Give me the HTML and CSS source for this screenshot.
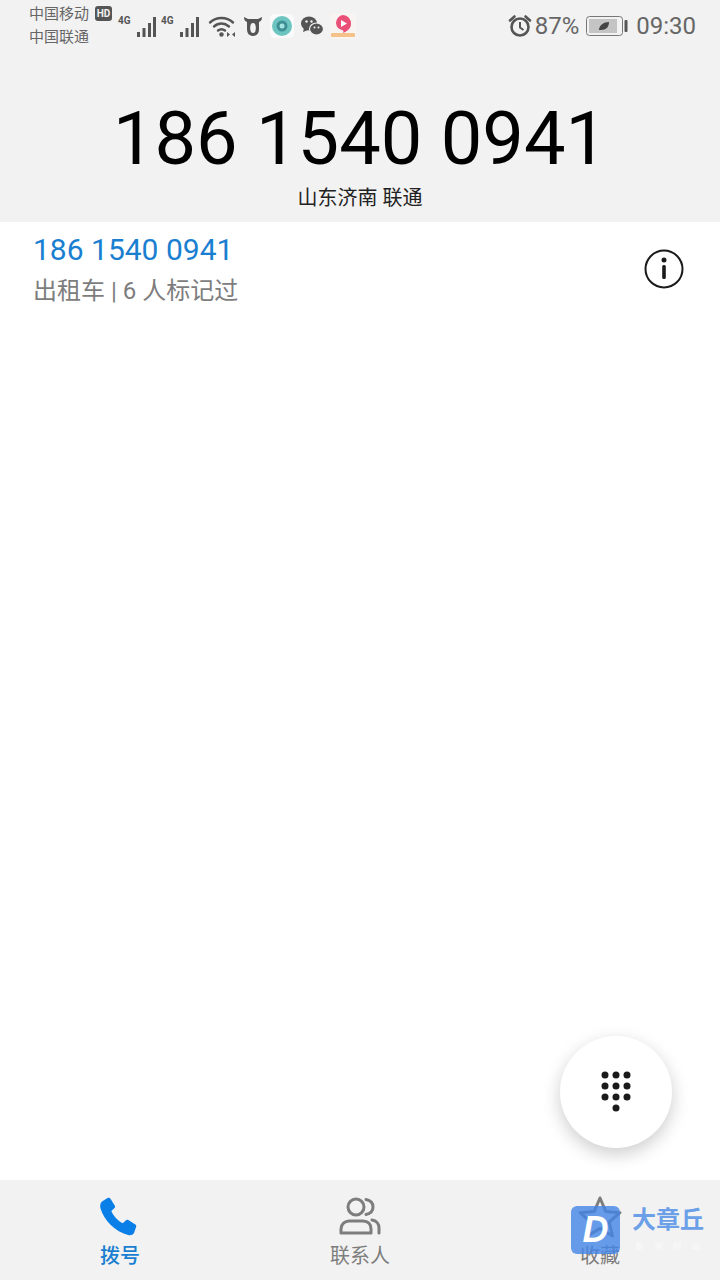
FILE: index.html
```html
<!DOCTYPE html>
<html lang="zh-CN">
<head>
<meta charset="utf-8">
<title>拨号</title>
<link rel="stylesheet" href="styles.css">
</head>
<body>
<div class="app">
  <header class="top">
    <div class="status">
      <div class="carriers">
        <div class="carrier">中国移动<svg class="hd" viewBox="0 0 17 15"><rect width="17" height="15" rx="3" fill="#555"/></svg><span class="hd-text">HD</span></div>
        <div class="carrier">中国联通</div>
      </div>
      <div class="sig"><span class="g">4G</span><svg width="24" height="24" viewBox="0 0 24 24"><g fill="#555"><rect x="0" y="18" width="3" height="5"/><rect x="5.500" y="14" width="3" height="9"/><rect x="11" y="9" width="3" height="14"/><rect x="16" y="3" width="3" height="20"/></g></svg></div>
      <div class="sig"><span class="g">4G</span><svg width="24" height="24" viewBox="0 0 24 24"><g fill="#555"><rect x="0" y="18" width="3" height="5"/><rect x="5.500" y="14" width="3" height="9"/><rect x="11" y="9" width="3" height="14"/><rect x="16" y="3" width="3" height="20"/></g></svg></div>
      <svg class="ic wifi" width="28" height="24" viewBox="0 0 28 24"><g fill="none" stroke="#555" stroke-width="2.400" stroke-linecap="round"><path d="M2 8.500C8.500 2.500 18.500 2.500 25 8.500"/><path d="M6 12.500C10.500 8.500 16.500 8.500 21 12.500"/><path d="M10 16.500C12 15 15 15 17 16.500"/></g><circle cx="13.500" cy="20.500" r="2.200" fill="#555"/><path d="M19 18l3 2.500-3 2.500zM27 18l-3 2.500 3 2.500z" fill="#555"/></svg>
      <svg class="ic bull" width="22" height="24" viewBox="0 0 22 24"><path d="M2 3c0 3 1 4 3 5v7c0 5 3 7 6 7s6-2 6-7V8c2-1 3-2 3-5l-4 2H6z" fill="#555"/><ellipse cx="11" cy="14" rx="2.800" ry="5" fill="#f2f2f2"/></svg>
      <svg class="ic" width="24" height="24" viewBox="0 0 24 24"><rect width="24" height="24" rx="5" fill="#fafafa"/><circle cx="12" cy="12" r="10" fill="#6cc5c0"/><circle cx="12" cy="12" r="5.500" fill="#3f8f95"/><circle cx="12" cy="12" r="2.500" fill="#a5e3e0"/></svg>
      <svg class="ic" width="24" height="24" viewBox="0 0 24 24"><ellipse cx="9" cy="9.500" rx="8" ry="7" fill="#555"/><path d="M4 14l-1 4 5-2z" fill="#555"/><ellipse cx="16.500" cy="15" rx="7" ry="6" fill="#555" stroke="#f2f2f2" stroke-width="1.200"/><circle cx="6.500" cy="7.500" r="1.200" fill="#f2f2f2"/><circle cx="11.500" cy="7.500" r="1.200" fill="#f2f2f2"/><circle cx="14.500" cy="13.500" r="1" fill="#f2f2f2"/><circle cx="18.500" cy="13.500" r="1" fill="#f2f2f2"/></svg>
      <svg class="ic" width="26" height="26" viewBox="0 0 26 26"><rect width="26" height="26" rx="4" fill="#f8f4f2"/><path d="M13 2a8.500 8.500 0 0 1 8 9c0 4-3 7-8 9 1-2 .5-2.500-1-3a8 8 0 0 1-6-7 8 8 0 0 1 7-8z" fill="#ea4f77"/><path d="M11 7l6 3.500-6 3.500z" fill="#fff"/><rect x="1" y="20" width="24" height="4" rx="1" fill="#f5c28a"/></svg>
      <div class="status-right">
        <svg class="alarm" width="24" height="24" viewBox="0 0 24 24"><circle cx="12" cy="13" r="8.500" fill="none" stroke="#555" stroke-width="2.600"/><path d="M12 8v5.500l3.500 2.500" fill="none" stroke="#555" stroke-width="2"/><path d="M2 6.500L6.500 2.500M22 6.500L17.500 2.500" stroke="#555" stroke-width="2.600" stroke-linecap="round"/></svg>
        <span class="pct">87%</span>
        <svg class="batt" width="42" height="20" viewBox="0 0 42 20"><rect x=".5" y=".5" width="36" height="19" rx="3" fill="none" stroke="#777"/><rect x="3" y="3" width="28" height="14" fill="#c4c4c4"/><path d="M13 14c0-5 5-8 10-8 0 5-3 8-8 8z" fill="#444"/><rect x="38.500" y="4" width="3" height="12" rx="1" fill="#555"/></svg>
        <span class="clock">09:30</span>
      </div>
    </div>
    <div class="dialed">186 1540 0941</div>
    <div class="region">山东济南 联通</div>
  </header>

  <main class="list">
    <div class="match">
      <div class="match-text">
        <div class="match-num">186 1540 0941</div>
        <div class="match-tag">出租车 | 6 人标记过</div>
      </div>
      <svg class="info" width="40" height="40" viewBox="0 0 40 40"><circle cx="20" cy="20" r="18.500" fill="none" stroke="#1a1a1a" stroke-width="2"/><circle cx="20" cy="11" r="2.500" fill="#1a1a1a"/><rect x="18.200" y="16" width="3.600" height="14" rx="1.500" fill="#1a1a1a"/></svg>
    </div>
  </main>

  <div class="fab">
    <svg width="32" height="42" viewBox="0 0 32 42"><g fill="#1a1a1a"><circle cx="5" cy="4" r="3.500"/><circle cx="16" cy="4" r="3.500"/><circle cx="27" cy="4" r="3.500"/><circle cx="5" cy="15" r="3.500"/><circle cx="16" cy="15" r="3.500"/><circle cx="27" cy="15" r="3.500"/><circle cx="5" cy="26" r="3.500"/><circle cx="16" cy="26" r="3.500"/><circle cx="27" cy="26" r="3.500"/><circle cx="16" cy="37" r="3.500"/></g></svg>
  </div>

  <nav class="tabs">
    <div class="tab active">
      <svg width="44" height="44" viewBox="0 0 44 44"><path d="M4 6.500L9.500 3c1.200-.7 2.300-.3 3 .8l4.200 6.700c.6 1 .4 2-.4 2.800l-3 2.700c1.900 4.800 6.500 9.800 11.400 12.300l3-2.900c.9-.8 2-.9 3-.2l6.600 4.300c1 .7 1.300 1.800.6 2.900L36 38c-1.200 2-3.600 2.600-6 2C16.500 36.500 6 25 2.500 13.500 1.800 10.700 2.300 8 4 6.500z" fill="#0a7fe8"/></svg>
      <span class="tab-label">拨号</span>
    </div>
    <div class="tab">
      <svg width="44" height="44" viewBox="0 0 44 44"><g fill="none" stroke="#7d7d7d" stroke-width="3"><circle cx="18" cy="12" r="8"/><path d="M3 38v-4c0-5 4-8 8-8h14c5 0 8 3 8 8v4z" stroke-linejoin="round"/><path d="M28 4.500c5 1 7 4 7 7.500s-2 6.500-7 7.500" stroke-linecap="round"/><path d="M34 25c4.500.7 7 4 7 8v5" stroke-linecap="round"/></g></svg>
      <span class="tab-label">联系人</span>
    </div>
    <div class="tab">
      <svg width="44" height="44" viewBox="0 0 44 44"><path d="M22 3l5.800 13.500 14.200 1.200-10.800 9.300 3.300 14L22 33.400 9.500 41l3.300-14L2 17.700l14.200-1.200z" fill="none" stroke="#7d7d7d" stroke-width="3" stroke-linejoin="round"/></svg>
      <span class="tab-label">收藏</span>
    </div>
  </nav>

  <aside class="mark">
    <div class="mark-logo"><span class="mark-d">D</span></div>
    <div class="mark-text">
      <div class="mark-name">大章丘</div>
      <div class="mark-sub"><span>新</span><span>闻</span><span>网</span><span>站</span></div>
    </div>
  </aside>
</div>
</body>
</html>
```

FILE: styles.css
```css
* { box-sizing: border-box; }
html, body { margin: 0; padding: 0; }
body {
  background: #fff;
  font-family: Roboto, "Noto Sans CJK SC", sans-serif;
}
.app {
  position: relative;
  width: 720px;
  height: 1280px;
  display: flex;
  flex-direction: column;
  overflow: hidden;
}

/* Header with status bar and dialed number */
.top {
  height: 222px;
  background: #f2f2f2;
  display: flex;
  flex-direction: column;
  align-items: center;
}
.status {
  width: 100%;
  height: 50px;
  padding: 2px 24px 0 29px;
  display: flex;
  align-items: center;
  color: #555;
}
.carriers { width: 89px; }
.carrier {
  position: relative;
  height: 23px;
  line-height: 23px;
  font-size: 15px;
  color: #666;
  white-space: nowrap;
}
.hd {
  position: absolute;
  left: 66px;
  top: 3px;
  width: 17px;
  height: 15px;
}
.hd-text {
  position: absolute;
  left: 66px;
  top: 3px;
  width: 17px;
  height: 15px;
  line-height: 15px;
  text-align: center;
  font-size: 10px;
  font-weight: 700;
  color: #f2f2f2;
}
.sig {
  position: relative;
  width: 43px;
  height: 24px;
  display: flex;
  justify-content: flex-end;
}
.g {
  position: absolute;
  left: 0;
  top: 1px;
  font-size: 10px;
  font-weight: 700;
  color: #555;
}
.ic { flex: none; margin-left: 6px; }
.wifi { margin-left: 4px; }
.status-right {
  margin-left: auto;
  display: flex;
  align-items: center;
}
.pct { font-size: 24px; color: #666; margin-left: 3px; }
.batt { margin: 0 8px 0 7px; }
.clock { font-size: 24px; color: #666; }

.dialed {
  margin-top: 45px;
  font-size: 74px;
  line-height: 88px;
  color: #000;
  white-space: nowrap;
}
.region {
  margin-top: 1px;
  font-size: 20px;
  line-height: 28px;
  color: #222;
}

/* Matched number row */
.list { flex: 1; background: #fff; }
.match {
  height: 130px;
  padding: 0 36px 36px 33px;
  display: flex;
  align-items: center;
  justify-content: space-between;
}
.match-num {
  font-size: 30px;
  line-height: 40px;
  color: #1a7fd0;
}
.match-tag {
  margin-top: 4px;
  font-size: 24px;
  line-height: 34px;
  color: #7d7d7d;
}

/* Floating dial pad button */
.fab {
  position: absolute;
  left: 560px;
  top: 1036px;
  width: 112px;
  height: 112px;
  border-radius: 50%;
  background: #fff;
  box-shadow: 0 6px 18px rgba(0, 0, 0, .2);
  display: flex;
  align-items: center;
  justify-content: center;
}

/* Bottom tabs */
.tabs {
  height: 100px;
  background: #f2f2f2;
  display: flex;
  padding: 15px 0 0;
}
.tab {
  width: 240px;
  display: flex;
  flex-direction: column;
  align-items: center;
  color: #7d7d7d;
}
.tab-label {
  margin-top: 3px;
  font-size: 20px;
  line-height: 28px;
}
.tab.active { color: #1a7fd0; }
.tab.active .tab-label { font-weight: 500; }

/* Corner site mark laid over the tabs */
.mark {
  position: absolute;
  left: 571px;
  top: 1206px;
  display: flex;
  gap: 12px;
}
.mark-logo {
  width: 49px;
  height: 48px;
  border-radius: 6px;
  background: rgba(66, 133, 230, .8);
  display: flex;
  align-items: center;
  justify-content: center;
}
.mark-d {
  font-family: "Liberation Sans", sans-serif;
  font-size: 36px;
  font-weight: 700;
  font-style: italic;
  color: #fff;
}
.mark-name {
  font-size: 24px;
  line-height: 28px;
  font-weight: 700;
  color: #6b9fe8;
  white-space: nowrap;
}
.mark-sub {
  display: flex;
  justify-content: space-between;
  padding: 6px 4px 0;
  font-size: 8px;
  color: #fafafa;
}
```
